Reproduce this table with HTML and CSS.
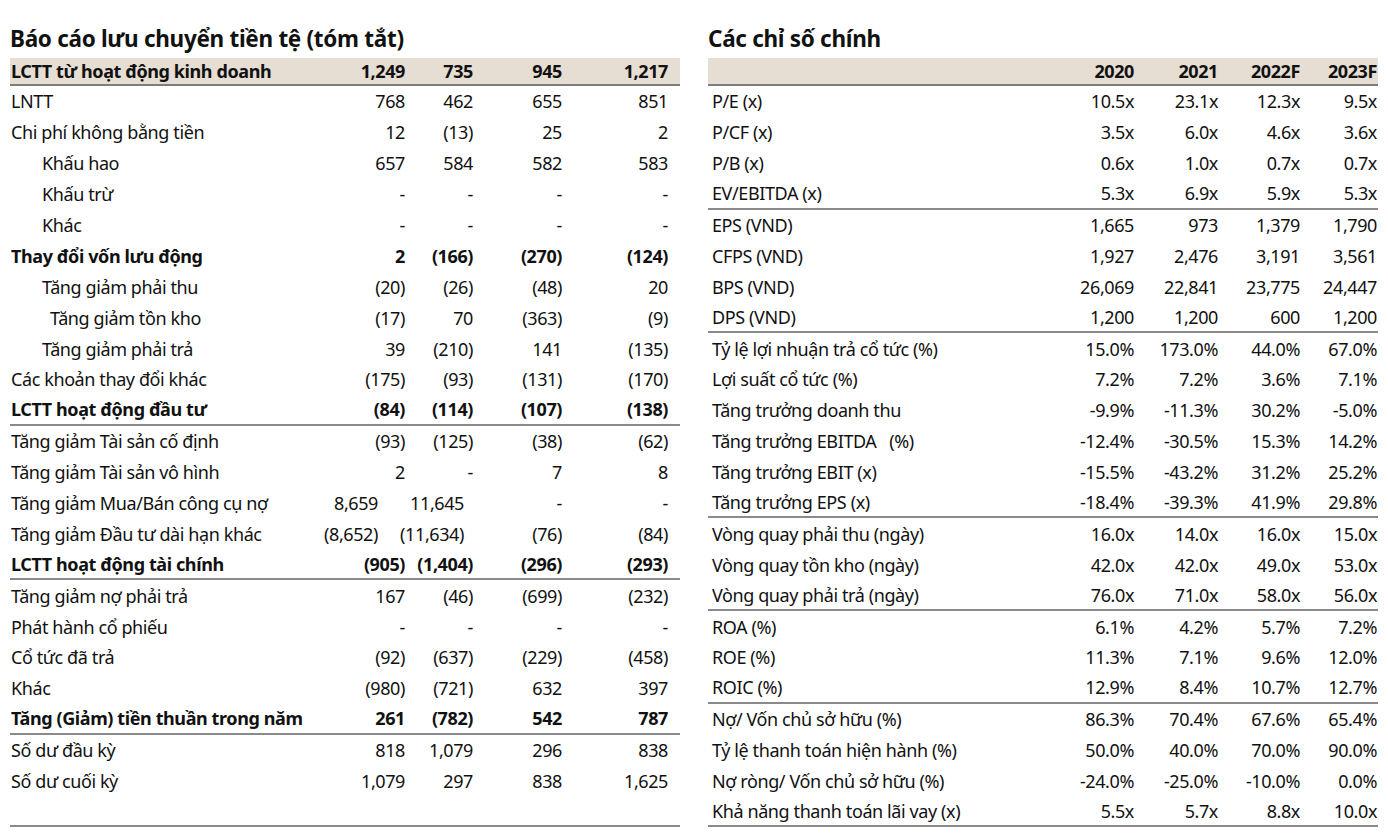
FILE: index.html
```html
<!DOCTYPE html>
<html lang="vi">
<head>
<meta charset="utf-8">
<title>Báo cáo</title>
<link rel="stylesheet" href="styles.css">
</head>
<body>
<div class="page">
  <section class="panel left">
    <h2 class="title">Báo cáo lưu chuyển tiền tệ (tóm tắt)</h2>
    <div class="tbl">
      <div class="row head"><span class="lbl">LCTT từ hoạt động kinh doanh</span><span>1,249</span><span>735</span><span>945</span><span>1,217</span></div>
      <div class="row"><span class="lbl">LNTT</span><span>768</span><span>462</span><span>655</span><span>851</span></div>
      <div class="row"><span class="lbl">Chi phí không bằng tiền</span><span>12</span><span>(13)</span><span>25</span><span>2</span></div>
      <div class="row"><span class="lbl ind">Khấu hao</span><span>657</span><span>584</span><span>582</span><span>583</span></div>
      <div class="row"><span class="lbl ind">Khấu trừ</span><span>-</span><span>-</span><span>-</span><span>-</span></div>
      <div class="row"><span class="lbl ind">Khác</span><span>-</span><span>-</span><span>-</span><span>-</span></div>
      <div class="row bold"><span class="lbl">Thay đổi vốn lưu động</span><span>2</span><span>(166)</span><span>(270)</span><span>(124)</span></div>
      <div class="row"><span class="lbl ind">Tăng giảm phải thu</span><span>(20)</span><span>(26)</span><span>(48)</span><span>20</span></div>
      <div class="row"><span class="lbl ind2">Tăng giảm tồn kho</span><span>(17)</span><span>70</span><span>(363)</span><span>(9)</span></div>
      <div class="row"><span class="lbl ind">Tăng giảm phải trả</span><span>39</span><span>(210)</span><span>141</span><span>(135)</span></div>
      <div class="row"><span class="lbl">Các khoản thay đổi khác</span><span>(175)</span><span>(93)</span><span>(131)</span><span>(170)</span></div>
      <div class="row bold sep"><span class="lbl">LCTT hoạt động đầu tư</span><span>(84)</span><span>(114)</span><span>(107)</span><span>(138)</span></div>
      <div class="row"><span class="lbl">Tăng giảm Tài sản cố định</span><span>(93)</span><span>(125)</span><span>(38)</span><span>(62)</span></div>
      <div class="row"><span class="lbl">Tăng giảm Tài sản vô hình</span><span>2</span><span>-</span><span>7</span><span>8</span></div>
      <div class="row"><span class="lbl">Tăng giảm Mua/Bán công cụ nợ</span><span class="c1x">8,659</span><span class="c2x">11,645</span><span>-</span><span>-</span></div>
      <div class="row"><span class="lbl">Tăng giảm Đầu tư dài hạn khác</span><span class="c1x">(8,652)</span><span class="c2x">(11,634)</span><span>(76)</span><span>(84)</span></div>
      <div class="row bold sep"><span class="lbl">LCTT hoạt động tài chính</span><span>(905)</span><span>(1,404)</span><span>(296)</span><span>(293)</span></div>
      <div class="row"><span class="lbl">Tăng giảm nợ phải trả</span><span>167</span><span>(46)</span><span>(699)</span><span>(232)</span></div>
      <div class="row"><span class="lbl">Phát hành cổ phiếu</span><span>-</span><span>-</span><span>-</span><span>-</span></div>
      <div class="row"><span class="lbl">Cổ tức đã trả</span><span>(92)</span><span>(637)</span><span>(229)</span><span>(458)</span></div>
      <div class="row"><span class="lbl">Khác</span><span>(980)</span><span>(721)</span><span>632</span><span>397</span></div>
      <div class="row bold sep"><span class="lbl">Tăng (Giảm) tiền thuần trong năm</span><span>261</span><span>(782)</span><span>542</span><span>787</span></div>
      <div class="row"><span class="lbl">Số dư đầu kỳ</span><span>818</span><span>1,079</span><span>296</span><span>838</span></div>
      <div class="row"><span class="lbl">Số dư cuối kỳ</span><span>1,079</span><span>297</span><span>838</span><span>1,625</span></div>
      <div class="row sep"><span class="lbl"></span><span></span><span></span><span></span><span></span></div>
    </div>
  </section>

  <section class="panel right">
    <h2 class="title">Các chỉ số chính</h2>
    <div class="tbl">
      <div class="row head"><span class="lbl"></span><span>2020</span><span>2021</span><span>2022F</span><span>2023F</span></div>
      <div class="row"><span class="lbl">P/E (x)</span><span>10.5x</span><span>23.1x</span><span>12.3x</span><span>9.5x</span></div>
      <div class="row"><span class="lbl">P/CF (x)</span><span>3.5x</span><span>6.0x</span><span>4.6x</span><span>3.6x</span></div>
      <div class="row"><span class="lbl">P/B (x)</span><span>0.6x</span><span>1.0x</span><span>0.7x</span><span>0.7x</span></div>
      <div class="row sep"><span class="lbl">EV/EBITDA (x)</span><span>5.3x</span><span>6.9x</span><span>5.9x</span><span>5.3x</span></div>
      <div class="row"><span class="lbl">EPS (VND)</span><span>1,665</span><span>973</span><span>1,379</span><span>1,790</span></div>
      <div class="row"><span class="lbl">CFPS (VND)</span><span>1,927</span><span>2,476</span><span>3,191</span><span>3,561</span></div>
      <div class="row"><span class="lbl">BPS (VND)</span><span>26,069</span><span>22,841</span><span>23,775</span><span>24,447</span></div>
      <div class="row sep"><span class="lbl">DPS (VND)</span><span>1,200</span><span>1,200</span><span>600</span><span>1,200</span></div>
      <div class="row"><span class="lbl">Tỷ lệ lợi nhuận trả cổ tức (%)</span><span>15.0%</span><span>173.0%</span><span>44.0%</span><span>67.0%</span></div>
      <div class="row"><span class="lbl">Lợi suất cổ tức (%)</span><span>7.2%</span><span>7.2%</span><span>3.6%</span><span>7.1%</span></div>
      <div class="row"><span class="lbl">Tăng trưởng doanh thu</span><span>-9.9%</span><span>-11.3%</span><span>30.2%</span><span>-5.0%</span></div>
      <div class="row"><span class="lbl">Tăng trưởng EBITDA&nbsp;&nbsp;&nbsp;(%)</span><span>-12.4%</span><span>-30.5%</span><span>15.3%</span><span>14.2%</span></div>
      <div class="row"><span class="lbl">Tăng trưởng EBIT (x)</span><span>-15.5%</span><span>-43.2%</span><span>31.2%</span><span>25.2%</span></div>
      <div class="row sep"><span class="lbl">Tăng trưởng EPS (x)</span><span>-18.4%</span><span>-39.3%</span><span>41.9%</span><span>29.8%</span></div>
      <div class="row"><span class="lbl">Vòng quay phải thu (ngày)</span><span>16.0x</span><span>14.0x</span><span>16.0x</span><span>15.0x</span></div>
      <div class="row"><span class="lbl">Vòng quay tồn kho (ngày)</span><span>42.0x</span><span>42.0x</span><span>49.0x</span><span>53.0x</span></div>
      <div class="row sep"><span class="lbl">Vòng quay phải trả (ngày)</span><span>76.0x</span><span>71.0x</span><span>58.0x</span><span>56.0x</span></div>
      <div class="row"><span class="lbl">ROA (%)</span><span>6.1%</span><span>4.2%</span><span>5.7%</span><span>7.2%</span></div>
      <div class="row"><span class="lbl">ROE (%)</span><span>11.3%</span><span>7.1%</span><span>9.6%</span><span>12.0%</span></div>
      <div class="row sep"><span class="lbl">ROIC (%)</span><span>12.9%</span><span>8.4%</span><span>10.7%</span><span>12.7%</span></div>
      <div class="row"><span class="lbl">Nợ/ Vốn chủ sở hữu (%)</span><span>86.3%</span><span>70.4%</span><span>67.6%</span><span>65.4%</span></div>
      <div class="row"><span class="lbl">Tỷ lệ thanh toán hiện hành (%)</span><span>50.0%</span><span>40.0%</span><span>70.0%</span><span>90.0%</span></div>
      <div class="row"><span class="lbl">Nợ ròng/ Vốn chủ sở hữu (%)</span><span>-24.0%</span><span>-25.0%</span><span>-10.0%</span><span>0.0%</span></div>
      <div class="row sep"><span class="lbl">Khả năng thanh toán lãi vay (x)</span><span>5.5x</span><span>5.7x</span><span>8.8x</span><span>10.0x</span></div>
    </div>
  </section>
</div>
</body>
</html>
```

FILE: styles.css
```css
html, body {
  margin: 0;
  padding: 0;
  background: #ffffff;
}
body {
  font-family: "Noto Sans", "Open Sans", sans-serif;
  color: #111111;
}
.page {
  display: grid;
  grid-template-columns: 670px 670px;
  column-gap: 28px;
  padding: 26px 10px 0 10px;
}
.title {
  margin: 0 0 6px 0;
  font-size: 22.5px;
  line-height: 26px;
  font-weight: 700;
  letter-spacing: -0.3px;
  color: #111;
}
.tbl {
  display: flex;
  flex-direction: column;
}
.row {
  display: grid;
  grid-template-columns: 1fr 60px 68px 89px 106px;
  padding-right: 12px;
  height: 30.9px;
  align-items: center;
  box-sizing: border-box;
  font-size: 18px;
  letter-spacing: -0.4px;
}
.right .row {
  grid-template-columns: 1fr 70px 84px 82px 77px;
  padding-right: 1px;
}
.row > span {
  justify-self: end;
  text-align: right;
  white-space: nowrap;
}
.row > .lbl {
  justify-self: stretch;
  text-align: left;
  padding-left: 1px;
}
.right .row > .lbl {
  padding-left: 4px;
}
.lbl.ind { padding-left: 32px; }
.lbl.ind2 { padding-left: 40px; }
.row > .c1x { margin-right: 27px; }
.row > .c2x { margin-right: 9px; }
.row.head {
  height: 28px;
  background: #e6ddd3;
  border-bottom: 2px solid #7d7d7d;
  font-weight: 700;
}
.row.bold {
  font-weight: 700;
}
.row.sep {
  border-bottom: 2px solid #8a8a8a;
}
```
